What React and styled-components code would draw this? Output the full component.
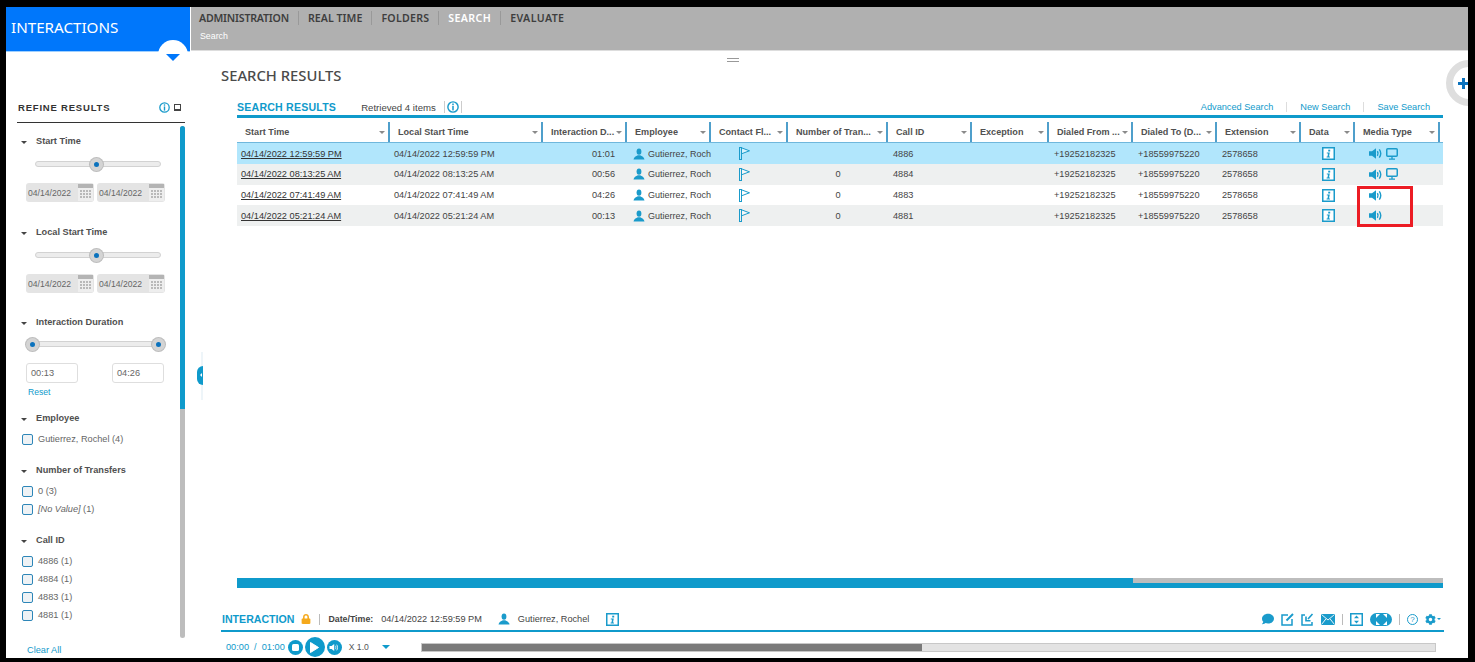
import React from "react";
import styled, { createGlobalStyle } from "styled-components";
import { FaCog, FaComment, FaLock } from "react-icons/fa";

const BLUE = "#0f9acb";
const ICON = "#1a9bcb";
const COLS = "153px 153px 84px 84px 77px 100px 84px 77px 84px 84px 84px 54px 85px";

const navItems = [
  { label: "ADMINISTRATION", track: -0.2 },
  { label: "REAL TIME", track: 0.05 },
  { label: "FOLDERS", track: 0.25 },
  { label: "SEARCH", track: 0.4 },
  { label: "EVALUATE", track: 0.4 },
];

const columns = [
  "Start Time",
  "Local Start Time",
  "Interaction D...",
  "Employee",
  "Contact Fl...",
  "Number of Tran...",
  "Call ID",
  "Exception",
  "Dialed From ...",
  "Dialed To (D...",
  "Extension",
  "Data",
  "Media Type",
];

const rows = [
  { time: "04/14/2022 12:59:59 PM", dur: "01:01", transfers: "", id: "4886", screen: true },
  { time: "04/14/2022 08:13:25 AM", dur: "00:56", transfers: "0", id: "4884", screen: true },
  { time: "04/14/2022 07:41:49 AM", dur: "04:26", transfers: "0", id: "4883" },
  { time: "04/14/2022 05:21:24 AM", dur: "00:13", transfers: "0", id: "4881" },
];

const Person = ({ size = 12 }) => (
  <svg width={size} height={size} viewBox="0 0 12 12">
    <ellipse cx="6" cy="3.6" rx="2.4" ry="3.2" fill={ICON} />
    <path d="M0.5 11.5 C0.8 8.8 3 8.2 4.8 7.2 L7.2 7.2 C9 8.2 11.2 8.8 11.5 11.5 Z" fill={ICON} />
  </svg>
);

const Flag = () => (
  <svg width="12" height="13" viewBox="0 0 12 13" fill="none" stroke={ICON}>
    <rect x="0.5" y="0.5" width="2" height="12" />
    <path d="M3 1 L10.5 3.8 L3 6.6" fill="#fff" fillOpacity="0.5" />
  </svg>
);

const InfoBox = () => (
  <svg width="13" height="13" viewBox="0 0 13 13">
    <rect x="0.75" y="0.75" width="11.5" height="11.5" fill="#fff" stroke={ICON} strokeWidth="1.5" />
    <rect x="6.2" y="2.7" width="2" height="1.8" fill={ICON} />
    <path d="M4.8 5.5 H7.8 L7 9.5 H8 V10.5 H4.6 V9.5 H5.5 L6 6.5 H4.8 Z" fill={ICON} />
  </svg>
);

const Speaker = () => (
  <svg width="13" height="13" viewBox="0 0 13 13" fill="none">
    <path d="M0 4.2 H3 L7 1.2 V11.8 L3 8.8 H0 Z" fill={ICON} />
    <path d="M8.4 4.2 C9.2 5.5 9.2 7.5 8.4 8.8" stroke={ICON} strokeWidth="1.4" />
    <path d="M10.3 2.4 C12 4.8 12 8.2 10.3 10.6" stroke={ICON} strokeWidth="1.4" />
  </svg>
);

const Monitor = () => (
  <svg width="12" height="12" viewBox="0 0 12 12" fill="none" stroke={ICON}>
    <rect x="0.75" y="0.75" width="10.5" height="7.5" rx="1" strokeWidth="1.5" />
    <path d="M6 8.5 V10.5 M3 11.2 H9" strokeWidth="1.3" />
  </svg>
);

const InfoCircle = ({ size = 11, color = ICON }) => (
  <svg width={size} height={size} viewBox="0 0 11 11" fill="none">
    <circle cx="5.5" cy="5.5" r="4.7" stroke={color} strokeWidth="1.3" />
    <rect x="4.8" y="2.3" width="1.4" height="1.4" fill={color} />
    <rect x="4.8" y="4.4" width="1.4" height="4.2" fill={color} />
  </svg>
);

const Calendar = () => (
  <svg width="15" height="17" viewBox="0 0 15 17">
    <rect width="15" height="17" fill="#eeeeee" />
    <rect width="15" height="4" fill="#b4b4b4" />
    {[6, 9, 12].map((y) =>
      [2, 5, 8, 11].map((x) => <rect key={`${x}-${y}`} x={x} y={y} width="2" height="2" fill="#b9b9b9" />)
    )}
  </svg>
);

const App = () => (
  <>
    <Global />
    <Frame>
      <Sidebar>
        <Brand>
          INTERACTIONS
          <BrandTab />
        </Brand>
        <RefineHead>
          REFINE RESULTS
          <RefineTools>
            <InfoCircle size={11} />
            <MiniBox />
          </RefineTools>
        </RefineHead>
        <SideBody>
          <Filters>
            <Section $gap={12}>
              <SectionTitle>Start Time</SectionTitle>
              <Slider $left={14} $width={126}>
                <Thumb $at={48.4} />
              </Slider>
              <DateRow>
                <DateBox>04/14/2022<Calendar /></DateBox>
                <DateBox>04/14/2022<Calendar /></DateBox>
              </DateRow>
            </Section>
            <Section $gap={24}>
              <SectionTitle>Local Start Time</SectionTitle>
              <Slider $left={14} $width={126}>
                <Thumb $at={48.4} />
              </Slider>
              <DateRow>
                <DateBox>04/14/2022<Calendar /></DateBox>
                <DateBox>04/14/2022<Calendar /></DateBox>
              </DateRow>
            </Section>
            <Section $gap={23}>
              <SectionTitle>Interaction Duration</SectionTitle>
              <Slider $left={6} $width={138} $top={10}>
                <Thumb $at={3.6} />
                <Thumb $at={95.6} />
              </Slider>
              <DurationRow>
                <DurationBox>00:13</DurationBox>
                <DurationBox>04:26</DurationBox>
              </DurationRow>
              <ResetLink>Reset</ResetLink>
            </Section>
            <Section $gap={14}>
              <SectionTitle>Employee</SectionTitle>
              <CheckList>
                <CheckRow><Check />Gutierrez, Rochel (4)</CheckRow>
              </CheckList>
            </Section>
            <Section $gap={19}>
              <SectionTitle>Number of Transfers</SectionTitle>
              <CheckList>
                <CheckRow><Check />0 (3)</CheckRow>
                <CheckRow><Check /><em>[No Value]</em>&nbsp;(1)</CheckRow>
              </CheckList>
            </Section>
            <Section $gap={19}>
              <SectionTitle>Call ID</SectionTitle>
              <CheckList>
                {["4886", "4884", "4883", "4881"].map((id) => (
                  <CheckRow key={id}><Check />{id} (1)</CheckRow>
                ))}
              </CheckList>
            </Section>
          </Filters>
          <Rail>
            <RailThumb />
          </Rail>
        </SideBody>
        <ClearAll>Clear All</ClearAll>
      </Sidebar>

      <Main>
        <TopBar>
          <NavRow>
            {navItems.map((item) => (
              <NavItem key={item.label} $active={item.label === "SEARCH"} $track={item.track}>
                {item.label}
              </NavItem>
            ))}
          </NavRow>
          <Crumb>Search</Crumb>
        </TopBar>

        <Content>
          <DragHandle />
          <CollapseTab />
          <PlusTab>
            <svg width="11" height="11" viewBox="0 0 11 11">
              <path d="M4 0 H7 V4 H11 V7 H7 V11 H4 V7 H0 V4 H4 Z" fill="#0b72bd" />
            </svg>
          </PlusTab>
          <PageTitle>SEARCH RESULTS</PageTitle>

          <ResultsBlock>
            <ResultsHead>
              <BlueTitle>SEARCH RESULTS</BlueTitle>
              <Retrieved>Retrieved 4 items</Retrieved>
              <RetrievedInfo><InfoCircle size={12} /></RetrievedInfo>
              <Links>
                <LinkText>Advanced Search</LinkText>
                <LinkText>New Search</LinkText>
                <LinkText>Save Search</LinkText>
              </Links>
            </ResultsHead>
            <HeaderRow>
              {columns.map((title) => (
                <HeadCell key={title}>
                  <span>{title}</span>
                  <SortCaret />
                </HeadCell>
              ))}
            </HeaderRow>
            <RowsWrap>
              {rows.map((r, i) => (
                <Row key={r.id} $selected={i === 0}>
                  <Cell $pad={4}><TimeLink>{r.time}</TimeLink></Cell>
                  <Cell $pad={4}>{r.time}</Cell>
                  <Cell $right>{r.dur}</Cell>
                  <EmployeeCell><Person />Gutierrez, Rochel</EmployeeCell>
                  <Cell $pad={28}><Flag /></Cell>
                  <Cell $center>{r.transfers}</Cell>
                  <Cell $pad={5}>{r.id}</Cell>
                  <Cell />
                  <Cell $pad={5}>+19252182325</Cell>
                  <Cell $pad={5}>+18559975220</Cell>
                  <Cell $pad={5}>2578658</Cell>
                  <Cell $center><InfoBox /></Cell>
                  <MediaCell>
                    <Speaker />
                    {r.screen && <Monitor />}
                  </MediaCell>
                </Row>
              ))}
              <Highlight />
            </RowsWrap>
            <Spacer />
            <HScroll>
              <HThumb />
            </HScroll>
          </ResultsBlock>

          <InteractionBar>
            <BlueTitle $tight>INTERACTION</BlueTitle>
            <LockIcon><FaLock size={10} color="#f5a91c" /></LockIcon>
            <BarSep />
            <DateLabel>Date/Time:</DateLabel>
            <DateValue>04/14/2022 12:59:59 PM</DateValue>
            <AgentIcon><Person size={12} /></AgentIcon>
            <DateValue>Gutierrez, Rochel</DateValue>
            <AgentInfo><InfoBox /></AgentInfo>
            <ToolRow>
              <FaComment size={12} color={ICON} />
              <svg width="13" height="13" viewBox="0 0 13 13" fill="none" stroke={ICON} strokeWidth="1.5">
                <path d="M7 2 H1 V12 H11 V6" />
                <path d="M5.5 7.5 L12 1" strokeWidth="2" />
              </svg>
              <svg width="13" height="13" viewBox="0 0 13 13" fill="none" stroke={ICON} strokeWidth="1.5">
                <path d="M4 2 H1 V12 H11 V9" />
                <path d="M11.5 1 L7 6" strokeWidth="1.6" />
                <path d="M5 3.5 V7.8 H9.5" strokeWidth="1.6" />
              </svg>
              <svg width="14" height="11" viewBox="0 0 14 11">
                <rect width="14" height="11" fill={ICON} />
                <path d="M0.5 0.5 L7 6 L13.5 0.5 M0.5 10.5 L5 4.8 M13.5 10.5 L9 4.8" stroke="#fff" strokeWidth="0.9" fill="none" />
              </svg>
              <ToolSep />
              <svg width="13" height="13" viewBox="0 0 13 13">
                <rect x="0.75" y="0.75" width="11.5" height="11.5" fill="#fff" stroke={ICON} strokeWidth="1.5" />
                <path d="M6.5 2.5 L9 5.2 H4 Z M6.5 10.5 L9 7.8 H4 Z" fill={ICON} />
              </svg>
              <ExpandPill>
                <svg width="11" height="11" viewBox="0 0 11 11" fill="#fff">
                  <path d="M0 0 H4 L0 4 Z M11 0 V4 L7 0 Z M0 11 V7 L4 11 Z M11 11 H7 L11 7 Z" />
                </svg>
              </ExpandPill>
              <ToolSep />
              <HelpCircle>?</HelpCircle>
              <GearWrap>
                <FaCog size={11} color={ICON} />
                <GearCaret />
              </GearWrap>
            </ToolRow>
          </InteractionBar>

          <Player>
            <PlayTime>00:00&nbsp; /&nbsp; 01:00</PlayTime>
            <RoundButton $size={15}>
              <svg width="7" height="7" viewBox="0 0 7 7"><rect width="7" height="7" rx="1.5" fill="#fff" /></svg>
            </RoundButton>
            <RoundButton $size={20}>
              <svg width="9" height="11" viewBox="0 0 9 11"><path d="M0.5 0.5 L8.5 5.5 L0.5 10.5 Z" fill="#fff" stroke="#fff" strokeLinejoin="round" /></svg>
            </RoundButton>
            <RoundButton $size={15}>
              <svg width="10" height="9" viewBox="0 0 13 13" fill="none">
                <path d="M0 4.5 H3 L6.8 1.5 V11.5 L3 8.5 H0 Z" fill="#fff" />
                <path d="M8.4 4 C9.4 5.4 9.4 7.6 8.4 9 M10.4 2.4 C12 4.8 12 8.2 10.4 10.6" stroke="#fff" strokeWidth="1.2" />
              </svg>
            </RoundButton>
            <Speed>X 1.0</Speed>
            <SpeedCaret />
            <Progress>
              <ProgressDone />
            </Progress>
          </Player>
        </Content>
      </Main>
    </Frame>
  </>
);

export default App;

const Global = createGlobalStyle`
  html, body {
    margin: 0;
    background: #000;
    overflow: hidden;
  }
  body {
    font-family: "Liberation Sans", Arial, sans-serif;
    color: #444;
  }
`;

const Frame = styled.div`
  display: flex;
  width: 1462px;
  height: 651px;
  margin: 7px 0 0 6px;
  background: #fff;
  overflow: hidden;
`;

const Sidebar = styled.aside`
  display: flex;
  flex-direction: column;
  flex: none;
  width: 184px;
`;

const Brand = styled.div`
  position: relative;
  flex: none;
  box-sizing: border-box;
  height: 45px;
  padding: 10px 0 0 5px;
  background: #0077fb;
  border-bottom: 1px solid #9fd0ff;
  color: #fff;
  font-family: "Noto Sans", sans-serif;
  font-size: 15.2px;
  line-height: 20px;
`;

const BrandTab = styled.div`
  position: absolute;
  left: 152px;
  top: 33px;
  width: 30px;
  height: 30px;
  border-radius: 50%;
  background: #fff;

  &::after {
    content: "";
    position: absolute;
    left: 8px;
    top: 14px;
    border: 7px solid transparent;
    border-bottom: 0;
    border-top-color: #0077fb;
  }
`;

const RefineHead = styled.div`
  display: flex;
  align-items: center;
  justify-content: space-between;
  flex: none;
  box-sizing: border-box;
  height: 24px;
  margin: 47px 5px 0 11px;
  padding: 0 4px 6px 1px;
  border-bottom: 1px solid #333;
  color: #333;
  font-size: 9.5px;
  font-weight: 700;
  letter-spacing: 0.8px;
`;

const RefineTools = styled.div`
  display: flex;
  align-items: center;
  gap: 4px;
`;

const MiniBox = styled.span`
  box-sizing: border-box;
  width: 7px;
  height: 7px;
  border: 1px solid #444;
  border-bottom-width: 2px;
`;

const SideBody = styled.div`
  display: flex;
  flex: 1;
  min-height: 0;
`;

const Filters = styled.div`
  flex: none;
  box-sizing: border-box;
  width: 174px;
  padding-left: 15px;
`;

const Section = styled.section`
  margin-top: ${({ $gap }) => $gap}px;
`;

const SectionTitle = styled.div`
  position: relative;
  height: 12px;
  padding-left: 15px;
  color: #505050;
  font-size: 9.2px;
  font-weight: 700;
  line-height: 12px;

  &::before {
    content: "";
    position: absolute;
    left: 0;
    top: 6px;
    border: 3px solid transparent;
    border-bottom: 0;
    border-top-color: #444;
  }
`;

const Slider = styled.div`
  position: relative;
  box-sizing: border-box;
  width: ${({ $width }) => $width}px;
  height: 6px;
  margin: ${({ $top = 11 }) => $top + 3}px 0 0 ${({ $left }) => $left}px;
  border: 1px solid #d2d2d2;
  border-radius: 3px;
  background: #ececec;
`;

const Thumb = styled.span`
  position: absolute;
  left: ${({ $at }) => $at}%;
  top: 50%;
  box-sizing: border-box;
  width: 13px;
  height: 13px;
  margin: -6.5px 0 0 -6.5px;
  border: 4px solid #d4d4d4;
  border-radius: 50%;
  background: #0b72bd;
  box-shadow: 0 0 0 1px #bdbdbd;
`;

const DateRow = styled.div`
  display: flex;
  gap: 3px;
  margin: 16px 0 0 5px;
`;

const DateBox = styled.div`
  display: flex;
  align-items: center;
  justify-content: space-between;
  box-sizing: border-box;
  width: 68px;
  height: 19px;
  padding: 0 1px 0 2px;
  border-radius: 3px;
  background: #e4e4e4;
  color: #666;
  font-size: 8.6px;
`;

const DurationRow = styled.div`
  display: flex;
  justify-content: space-between;
  width: 138px;
  margin: 16px 0 0 5px;
`;

const DurationBox = styled.div`
  box-sizing: border-box;
  width: 52px;
  height: 20px;
  padding-left: 4px;
  border: 1px solid #dedede;
  border-radius: 3px;
  color: #666;
  font-size: 9.2px;
  line-height: 18px;
`;

const ResetLink = styled.div`
  margin: 3px 0 0 7px;
  color: ${BLUE};
  font-size: 8.6px;
  line-height: 12px;
`;

const CheckList = styled.div`
  display: flex;
  flex-direction: column;
  gap: 6px;
  margin-top: 9px;
`;

const CheckRow = styled.div`
  display: flex;
  align-items: center;
  height: 12px;
  color: #666;
  font-size: 9.2px;
`;

const Check = styled.span`
  flex: none;
  box-sizing: border-box;
  width: 11px;
  height: 11px;
  margin: 0 5px 0 1px;
  border: 1px solid #2d86b8;
  border-radius: 2px;
  background: #eef2f5;
`;

const Rail = styled.div`
  flex: none;
  width: 5px;
  height: 512px;
  margin-top: 3px;
  border-radius: 3px;
  background: #bdbdbd;
  overflow: hidden;
`;

const RailThumb = styled.div`
  height: 283px;
  background: ${BLUE};
`;

const ClearAll = styled.div`
  flex: none;
  height: 17px;
  padding-left: 21px;
  color: ${BLUE};
  font-size: 9.2px;
  line-height: 18px;
`;

const Main = styled.main`
  display: flex;
  flex-direction: column;
  flex: 1;
  min-width: 0;
  margin-left: 1px;
`;

const TopBar = styled.header`
  flex: none;
  box-sizing: border-box;
  height: 44px;
  padding: 4px 0 0 8px;
  background: #b0b0b0;
  border-bottom: 1px solid #ddd;
`;

const NavRow = styled.nav`
  display: flex;
`;

const NavItem = styled.span`
  padding-right: 9px;
  margin-right: 9px;
  border-right: 1px solid #999;
  color: ${({ $active }) => ($active ? "#fff" : "#3e3e3e")};
  font-family: "Noto Sans", sans-serif;
  font-size: 10.6px;
  font-weight: 600;
  letter-spacing: ${({ $track }) => $track}px;
  line-height: 14px;

  &:last-child {
    border-right: 0;
  }
`;

const Crumb = styled.div`
  margin-top: 5px;
  padding-left: 1px;
  color: #fff;
  font-size: 8.8px;
  line-height: 12px;
`;

const Content = styled.div`
  position: relative;
  display: flex;
  flex-direction: column;
  flex: 1;
  min-height: 0;
`;

const DragHandle = styled.div`
  position: absolute;
  left: 536px;
  top: 7px;
  width: 12px;
  height: 2px;
  border-top: 1px solid #999;
  border-bottom: 1px solid #999;
`;

const CollapseTab = styled.div`
  position: absolute;
  left: 10px;
  top: 301px;
  width: 2px;
  height: 48px;
  background: #eef5f9;

  &::before {
    content: "";
    position: absolute;
    left: -4px;
    top: 14px;
    width: 6px;
    height: 19px;
    border-radius: 10px 0 0 10px;
    background: ${BLUE};
  }

  &::after {
    content: "";
    position: absolute;
    left: -1px;
    top: 21px;
    border: 2.5px solid transparent;
    border-left: 0;
    border-right-color: #fff;
  }
`;

const PlusTab = styled.div`
  position: absolute;
  right: -24px;
  top: 9px;
  display: flex;
  align-items: center;
  box-sizing: border-box;
  width: 46px;
  height: 46px;
  padding-left: 5px;
  border: 7px solid #dedede;
  border-radius: 50%;
  background: #fff;
`;

const PageTitle = styled.h1`
  flex: none;
  height: 16px;
  margin: 16px 0 0 30px;
  color: #4a4a4a;
  font-family: "Noto Sans", sans-serif;
  font-size: 14.8px;
  font-weight: 500;
  line-height: 16px;
`;

const ResultsBlock = styled.section`
  display: flex;
  flex-direction: column;
  flex: 1;
  min-height: 0;
  margin: 17px 25px 0 46px;
`;

const ResultsHead = styled.div`
  display: flex;
  align-items: center;
  flex: none;
  box-sizing: border-box;
  height: 18px;
  padding-bottom: 1px;
  border-bottom: 3px solid ${BLUE};
`;

const BlueTitle = styled.div`
  color: ${BLUE};
  font-size: 10.6px;
  font-weight: 700;
  letter-spacing: ${({ $tight }) => ($tight ? 0 : 0.2)}px;
`;

const Retrieved = styled.div`
  margin-left: 25px;
  color: #444;
  font-size: 9.6px;
`;

const RetrievedInfo = styled.div`
  display: flex;
  box-sizing: border-box;
  margin-left: 8px;
  padding: 0 2px;
  border-left: 1px solid #ccc;
  border-right: 1px solid #ccc;
`;

const Links = styled.div`
  display: flex;
  margin-left: auto;
  padding-right: 13px;
`;

const LinkText = styled.span`
  margin-left: 13px;
  padding-left: 13px;
  border-left: 1px solid #ddd;
  color: ${BLUE};
  font-size: 9.2px;
  line-height: 10px;

  &:first-child {
    border-left: 0;
  }
`;

const HeaderRow = styled.div`
  display: grid;
  flex: none;
  grid-template-columns: ${COLS};
  box-sizing: border-box;
  height: 25px;
  padding-top: 1px;
  border-bottom: 1px solid #6fb7dc;
`;

const HeadCell = styled.div`
  display: flex;
  align-items: center;
  justify-content: space-between;
  box-sizing: border-box;
  margin-top: 3px;
  padding: 0 3px 0 8px;
  border-right: 2px solid #4f9fcb;
  color: #505050;
  font-size: 9.1px;
  font-weight: 700;
  white-space: nowrap;
  overflow: hidden;
`;

const SortCaret = styled.i`
  flex: none;
  border: 3.5px solid transparent;
  border-bottom: 0;
  border-top-color: #8a8a8a;
`;

const RowsWrap = styled.div`
  position: relative;
  flex: none;
`;

const Row = styled.div`
  display: grid;
  grid-template-columns: ${COLS};
  height: 20.75px;
  background: ${({ $selected }) => ($selected ? "#b1e6fc" : "#fff")};

  &:nth-child(even) {
    background: #eef0f0;
  }
`;

const Cell = styled.div`
  display: flex;
  align-items: center;
  justify-content: ${({ $right, $center }) => ($right ? "flex-end" : $center ? "center" : "flex-start")};
  padding: 0.6px ${({ $right }) => ($right ? 12 : 0)}px 0 ${({ $pad = 0 }) => $pad}px;
  color: #444;
  font-size: 9.2px;
  white-space: nowrap;
  overflow: hidden;
`;

const EmployeeCell = styled(Cell)`
  gap: 3px;
  padding-left: 6px;
  font-size: 9px;

  svg {
    flex: none;
  }
`;

const MediaCell = styled(Cell)`
  gap: 4px;
  padding-left: 14px;
`;

const TimeLink = styled.span`
  color: #333;
  text-decoration: underline;
`;

const Highlight = styled.div`
  position: absolute;
  left: 1120px;
  top: 43px;
  box-sizing: border-box;
  width: 56px;
  height: 41px;
  border: 3px solid #ec1c24;
`;

const Spacer = styled.div`
  flex: 1;
`;

const HScroll = styled.div`
  flex: none;
  box-sizing: border-box;
  height: 10px;
  border-bottom: 5px solid ${BLUE};
  background: #bdbdbd;
`;

const HThumb = styled.div`
  width: 896px;
  height: 5px;
  background: ${BLUE};
`;

const InteractionBar = styled.div`
  display: flex;
  align-items: center;
  flex: none;
  box-sizing: border-box;
  height: 21px;
  margin: 23px 24px 0 30px;
  padding: 0 3px 3px 1px;
  border-bottom: 2px solid ${BLUE};
`;

const LockIcon = styled.span`
  display: flex;
  margin-left: 7px;
`;

const BarSep = styled.span`
  width: 1px;
  height: 11px;
  margin: 0 8px;
  background: #bbb;
`;

const DateLabel = styled.span`
  color: #444;
  font-size: 8.8px;
  font-weight: 700;
`;

const DateValue = styled.span`
  margin-left: 8px;
  color: #444;
  font-size: 9.2px;
`;

const AgentIcon = styled.span`
  display: flex;
  margin-left: 16px;
`;

const AgentInfo = styled.span`
  display: flex;
  margin-left: 17px;
`;

const ToolRow = styled.div`
  display: flex;
  align-items: center;
  gap: 7px;
  margin-left: auto;
`;

const ToolSep = styled.span`
  width: 1px;
  height: 11px;
  background: #bbb;
`;

const ExpandPill = styled.span`
  display: flex;
  align-items: center;
  justify-content: center;
  width: 22px;
  height: 13px;
  border-radius: 7px;
  background: ${ICON};
`;

const HelpCircle = styled.span`
  box-sizing: border-box;
  width: 11px;
  height: 11px;
  border: 1px solid ${ICON};
  border-radius: 50%;
  color: ${ICON};
  font-size: 8px;
  line-height: 9px;
  text-align: center;
`;

const GearWrap = styled.span`
  display: flex;
  align-items: center;
  gap: 1px;
`;

const GearCaret = styled.i`
  border: 2.5px solid transparent;
  border-bottom: 0;
  border-top-color: ${ICON};
`;

const Player = styled.div`
  display: flex;
  align-items: center;
  flex: none;
  box-sizing: border-box;
  height: 26px;
  padding: 4px 0 0 35px;
`;

const PlayTime = styled.span`
  margin-right: 3px;
  color: ${BLUE};
  font-size: 9.2px;
  white-space: nowrap;
`;

const RoundButton = styled.span`
  display: flex;
  align-items: center;
  justify-content: center;
  flex: none;
  width: ${({ $size }) => $size}px;
  height: ${({ $size }) => $size}px;
  margin-right: 2px;
  border-radius: 50%;
  background: ${BLUE};
`;

const Speed = styled.span`
  margin-left: 5px;
  color: #555;
  font-size: 8.6px;
`;

const SpeedCaret = styled.i`
  margin-left: 13px;
  border: 4.5px solid transparent;
  border-bottom: 0;
  border-top-color: ${BLUE};
`;

const Progress = styled.div`
  box-sizing: border-box;
  width: 1015px;
  height: 9px;
  margin-left: 31px;
  border: 1px solid #c8c8c8;
  background: #e3e3e3;
`;

const ProgressDone = styled.div`
  width: 500px;
  height: 100%;
  background: #7a7a7a;
`;
